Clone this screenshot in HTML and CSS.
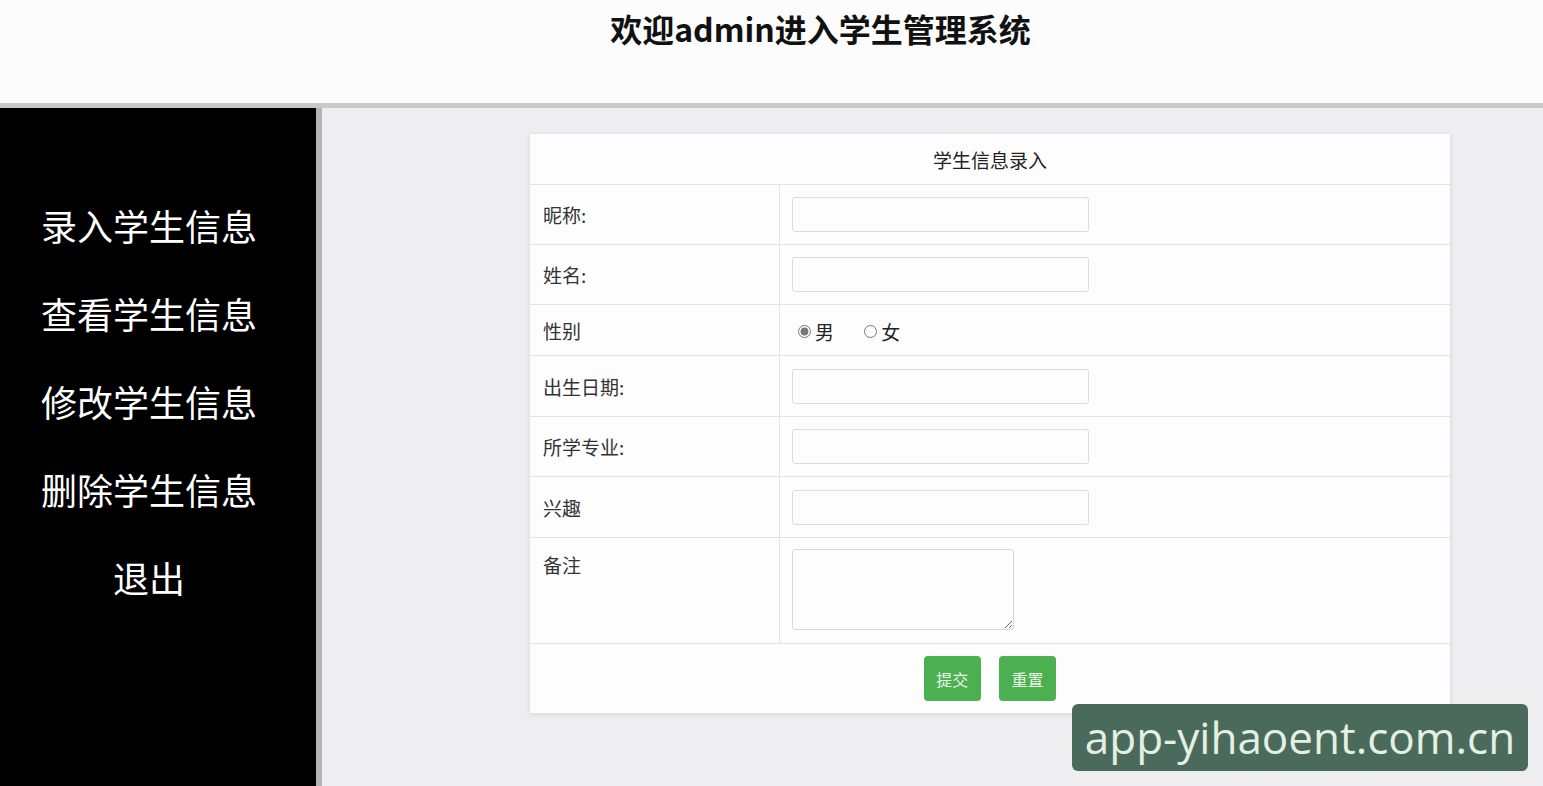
FILE: index.html
```html
<!DOCTYPE html>
<html lang="zh-CN">
<head>
<meta charset="utf-8">
<title>学生管理系统</title>
<link rel="stylesheet" href="styles.css">
</head>
<body>
<header class="topbar">
  <h1 class="title">欢迎admin进入学生管理系统</h1>
</header>
<div class="layout">
  <nav class="sidebar">
    <a class="nav-item">录入学生信息</a>
    <a class="nav-item">查看学生信息</a>
    <a class="nav-item">修改学生信息</a>
    <a class="nav-item">删除学生信息</a>
    <a class="nav-item">退出</a>
  </nav>
  <main class="main">
    <form class="card">
      <table class="form-table">
        <tr class="row-head"><th colspan="2">学生信息录入</th></tr>
        <tr class="row"><td class="label">昵称:</td><td class="field"><input class="text-input" type="text"></td></tr>
        <tr class="row"><td class="label">姓名:</td><td class="field"><input class="text-input" type="text"></td></tr>
        <tr class="row row-radio"><td class="label">性别</td><td class="field">
          <label class="radio"><input type="radio" name="sex" checked>男</label>
          <label class="radio"><input type="radio" name="sex">女</label>
        </td></tr>
        <tr class="row row-tall"><td class="label">出生日期:</td><td class="field"><input class="text-input" type="text"></td></tr>
        <tr class="row"><td class="label">所学专业:</td><td class="field"><input class="text-input" type="text"></td></tr>
        <tr class="row row-tall"><td class="label">兴趣</td><td class="field"><input class="text-input" type="text"></td></tr>
        <tr class="row row-area"><td class="label label-top">备注</td><td class="field field-top"><textarea class="area"></textarea></td></tr>
        <tr class="row-foot"><td colspan="2">
          <button type="button" class="btn">提交</button>
          <button type="button" class="btn">重置</button>
        </td></tr>
      </table>
    </form>
  </main>
</div>
<div class="watermark">app-yihaoent.com.cn</div>
</body>
</html>
```
FILE: styles.css
```css
html, body {
  margin: 0;
  padding: 0;
  height: 100%;
  overflow: hidden;
}
body {
  font-family: "Noto Sans CJK SC", "Noto Sans", sans-serif;
  background: #eeedf0;
  color: #333;
}
.topbar {
  height: 103px;
  background: #fcfcfc;
  border-bottom: 5px solid #c9c9c9;
  box-sizing: content-box;
}
.title {
  margin: 0;
  padding: 7px 0 0 98px;
  text-align: center;
  font-size: 32px;
  line-height: 42px;
  font-weight: 700;
  color: #111;
}
.layout {
  display: flex;
  height: calc(100vh - 108px);
}
.sidebar {
  width: 316px;
  flex: 0 0 316px;
  background: #000;
  border-right: 6px solid #b4b4b4;
  display: flex;
  flex-direction: column;
  padding-top: 73px;
  box-sizing: content-box;
}
.nav-item {
  display: block;
  color: #fff;
  font-size: 36px;
  line-height: 88px;
  text-align: center;
  padding-right: 18px;
  cursor: pointer;
}
.main {
  flex: 1;
  padding: 26px 0 0 208px;
}
.card {
  width: 920px;
  background: #fdfdfd;
  box-shadow: 0 1px 5px rgba(0,0,0,0.12);
  margin: 0;
}
.form-table {
  width: 100%;
  border-collapse: collapse;
  font-size: 19px;
}
.row-head th {
  height: 50px;
  font-weight: 400;
  font-size: 19px;
  color: #222;
  border-bottom: 1px solid #e3e3e3;
  padding: 0;
}
.row td {
  border-bottom: 1px solid #e3e3e3;
  height: 59px;
  padding: 0;
}
.row-radio td { height: 50px; }
.row-tall td { height: 60px; }
.row-area td { height: 92px; }
.label {
  width: 236px;
  padding-left: 13px !important;
  border-right: 1px solid #e3e3e3;
  color: #333;
}
.field {
  padding-left: 12px !important;
}
.label-top, .field-top { vertical-align: top; }
.label-top { padding-top: 13px !important; }
.field-top { padding-top: 11px !important; }
.text-input {
  display: block;
  width: 297px;
  height: 35px;
  box-sizing: border-box;
  border: 1px solid #dcdcdc;
  border-radius: 3px;
  background: #fdfdfd;
  margin: 0;
}
.area {
  display: block;
  width: 222px;
  height: 81px;
  box-sizing: border-box;
  border: 1px solid #d8d8d8;
  border-radius: 3px;
  background: #fdfdfd;
  margin: 0;
}
.radio {
  display: inline-flex;
  align-items: center;
  margin-right: 20px;
  color: #222;
  font-size: 19px;
}
.radio input {
  margin: 0 4px 0 6px;
  width: 13px;
  height: 13px;
  accent-color: #777;
}
.row-foot td {
  height: 69px;
  text-align: center;
  padding: 0;
}
.btn {
  width: 57px;
  height: 45px;
  border: none;
  border-radius: 4px;
  background: #4caf50;
  color: #eaf6ea;
  font-family: "Noto Sans CJK SC", sans-serif;
  font-size: 16px;
  margin: 0 7px;
  padding: 0;
  vertical-align: middle;
}
.watermark {
  position: absolute;
  left: 1072px;
  top: 704px;
  width: 456px;
  height: 67px;
  box-sizing: border-box;
  background: #4a6b5b;
  border-radius: 6px;
  color: #e4f0e2;
  font-family: "Open Sans", "DejaVu Sans", sans-serif;
  font-size: 44px;
  line-height: 67px;
  text-align: center;
}
```
